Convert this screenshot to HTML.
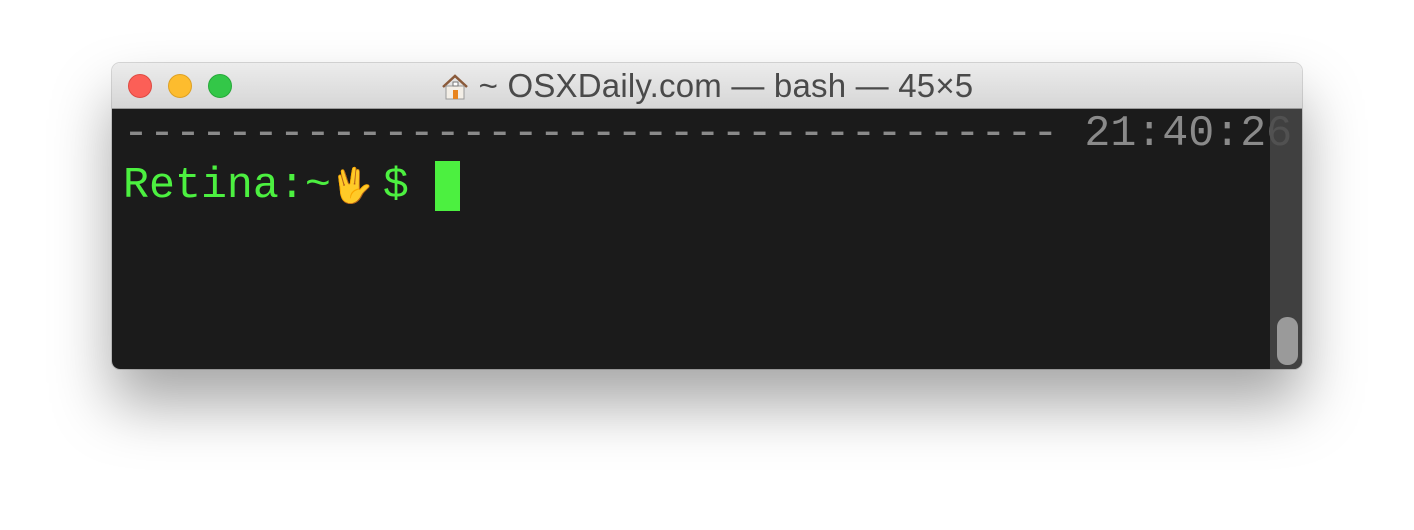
<!DOCTYPE html>
<html><head><style>
body{margin:0;width:1414px;height:530px;background:#fff;position:relative;overflow:hidden;font-family:"Liberation Sans",sans-serif}
.win{position:absolute;left:112px;top:63px;width:1190px;height:306px;border-radius:8px;overflow:hidden;box-shadow:0 35px 60px rgba(0,0,0,.35),0 0 0 1px rgba(0,0,0,.15)}
.tb{position:absolute;left:0;top:0;width:100%;height:45px;background:linear-gradient(#ececec,#d6d6d6);border-bottom:1px solid #9a9a9a}
.dot{position:absolute;top:11px;width:23px;height:23px;border-radius:50%}
.title{position:absolute;left:0;right:0;top:4px;text-align:center;font-size:33px;color:#4a4a4a;letter-spacing:0.2px}
.term{position:absolute;left:0;top:46px;width:1190px;height:260px;background:#1b1b1b}
.sb{position:absolute;left:1158px;top:46px;width:32px;height:260px;background:rgba(70,70,70,.85)}
.thumb{position:absolute;left:1165px;top:254px;width:21px;height:48px;border-radius:10px;background:#9a9a9a}
.line{position:absolute;left:11px;font-family:"Liberation Mono",monospace;font-size:43.3px;white-space:pre;line-height:50px}
</style></head><body>
<div class="win">
 <div class="tb">
  <div class="dot" style="left:16px;background:#fc5f57;border:1px solid #de4a42;width:22px;height:22px"></div>
  <div class="dot" style="left:56px;background:#fdbc2e;border:1px solid #dea123;width:22px;height:22px"></div>
  <div class="dot" style="left:96px;background:#33c748;border:1px solid #27a93a;width:22px;height:22px"></div>
  <div class="title"><svg width="28" height="26" viewBox="0 0 28 26" style="vertical-align:-3px;margin-right:10px"><path d="M2 13 L14 2 L26 13" fill="none" stroke="#8a5a3a" stroke-width="2.5"/><rect x="5" y="12" width="18" height="13" fill="#f3eee6" stroke="#999"/><rect x="12" y="16" width="5" height="9" fill="#e8841d"/><rect x="12" y="8" width="5" height="4" fill="#fff" stroke="#777"/></svg>~ OSXDaily.com — bash — 45×5</div>
 </div>
 <div class="term"></div>
 <div class="line" style="top:47px;color:#8a8a8a">------------------------------------ 21:40:26</div>
 <div class="line" style="top:98px;color:#4cf040">Retina:~<span style="font-size:34px;font-family:'DejaVu Sans',sans-serif;display:inline-block;width:52px">🖖</span>$ <span style="display:inline-block;width:25px;height:50px;background:#4cf040;vertical-align:top"></span></div>
 <div class="sb"></div>
 <div class="thumb"></div>
</div>
</body></html>
